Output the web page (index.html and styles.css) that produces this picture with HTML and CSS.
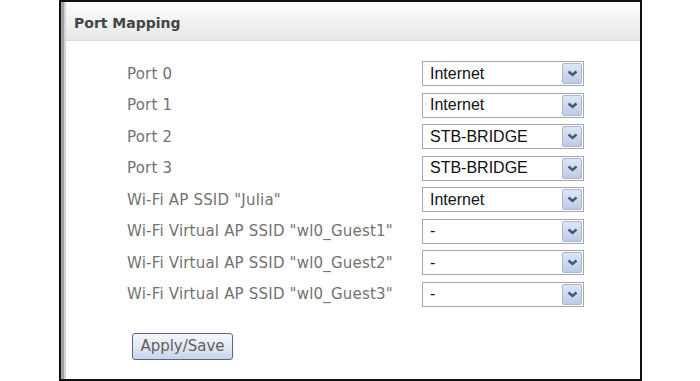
FILE: index.html
```html
<!DOCTYPE html>
<html lang="en">
<head>
    <meta charset="UTF-8">
    <title>Port Mapping</title>
    <link rel="stylesheet" href="styles.css">
</head>
<body>
    <div class="panel">
        <div class="shade">
            <div class="inner">
                <div class="header">Port Mapping</div>
                <div class="form">
                    <div class="label">Port 0</div>
                    <div class="dropdown"><span class="value">Internet</span><span class="arrow"><svg width="11" height="7" viewBox="0 0 11 7"><path d="M1.5 1.5 L5.5 5 L9.5 1.5" fill="none" stroke="#45567a" stroke-width="2.4"/></svg></span></div>

                    <div class="label">Port 1</div>
                    <div class="dropdown"><span class="value">Internet</span><span class="arrow"><svg width="11" height="7" viewBox="0 0 11 7"><path d="M1.5 1.5 L5.5 5 L9.5 1.5" fill="none" stroke="#45567a" stroke-width="2.4"/></svg></span></div>

                    <div class="label">Port 2</div>
                    <div class="dropdown"><span class="value">STB-BRIDGE</span><span class="arrow"><svg width="11" height="7" viewBox="0 0 11 7"><path d="M1.5 1.5 L5.5 5 L9.5 1.5" fill="none" stroke="#45567a" stroke-width="2.4"/></svg></span></div>

                    <div class="label">Port 3</div>
                    <div class="dropdown"><span class="value">STB-BRIDGE</span><span class="arrow"><svg width="11" height="7" viewBox="0 0 11 7"><path d="M1.5 1.5 L5.5 5 L9.5 1.5" fill="none" stroke="#45567a" stroke-width="2.4"/></svg></span></div>

                    <div class="label">Wi-Fi AP SSID "Julia"</div>
                    <div class="dropdown"><span class="value">Internet</span><span class="arrow"><svg width="11" height="7" viewBox="0 0 11 7"><path d="M1.5 1.5 L5.5 5 L9.5 1.5" fill="none" stroke="#45567a" stroke-width="2.4"/></svg></span></div>

                    <div class="label">Wi-Fi Virtual AP SSID "wl0_Guest1"</div>
                    <div class="dropdown"><span class="value">-</span><span class="arrow"><svg width="11" height="7" viewBox="0 0 11 7"><path d="M1.5 1.5 L5.5 5 L9.5 1.5" fill="none" stroke="#45567a" stroke-width="2.4"/></svg></span></div>

                    <div class="label">Wi-Fi Virtual AP SSID "wl0_Guest2"</div>
                    <div class="dropdown"><span class="value">-</span><span class="arrow"><svg width="11" height="7" viewBox="0 0 11 7"><path d="M1.5 1.5 L5.5 5 L9.5 1.5" fill="none" stroke="#45567a" stroke-width="2.4"/></svg></span></div>

                    <div class="label">Wi-Fi Virtual AP SSID "wl0_Guest3"</div>
                    <div class="dropdown"><span class="value">-</span><span class="arrow"><svg width="11" height="7" viewBox="0 0 11 7"><path d="M1.5 1.5 L5.5 5 L9.5 1.5" fill="none" stroke="#45567a" stroke-width="2.4"/></svg></span></div>
                </div>
                <button class="apply-button">Apply/Save</button>
            </div>
        </div>
    </div>
</body>
</html>
```

FILE: styles.css
```css
* {
    box-sizing: border-box;
}

body {
    margin: 0;
    background-color: #fff;
    font-family: "DejaVu Sans", Verdana, sans-serif;
}

.panel {
    margin-left: 59px;
    width: 583px;
    height: 381px;
    border: 2px solid #111;
    overflow: hidden;
}

.shade {
    height: 100%;
    border-left: 3px solid #a2a2a2;
}

.inner {
    height: 100%;
    border-left: 2px solid #d4d4d4;
}

.header {
    height: 39px;
    padding-left: 8px;
    padding-top: 3px;
    display: flex;
    align-items: center;
    background: linear-gradient(#fcfcfc, #e8e8e8);
    border-bottom: 1px solid #d9d9d9;
    font-size: 14px;
    font-weight: bold;
    color: #444;
}

.form {
    display: grid;
    grid-template-columns: 295px 162px;
    grid-auto-rows: 25px;
    row-gap: 6.5px;
    padding-top: 20px;
    padding-left: 61px;
}

.label {
    display: flex;
    align-items: center;
    font-size: 15px;
    letter-spacing: 0.2px;
    color: #727272;
    white-space: nowrap;
}

.dropdown {
    display: flex;
    align-items: center;
    border: 1px solid #a8a8a8;
    background-color: #fff;
    padding: 1px;
}

.value {
    flex: 1;
    padding-left: 6px;
    font-family: "Liberation Sans", Arial, sans-serif;
    font-size: 16px;
    color: #111;
}

.arrow {
    width: 20px;
    height: 21px;
    display: flex;
    align-items: center;
    justify-content: center;
    border: 1px solid #a9b8d2;
    border-radius: 2px;
    background: linear-gradient(#dde6f5, #bccbe6);
}

.apply-button {
    margin-top: 26px;
    margin-left: 66px;
    width: 101px;
    height: 27px;
    padding: 0;
    border: 1px solid #56678a;
    border-radius: 3px;
    background: linear-gradient(#f4f7fc, #dfe6f3 60%, #c6d3ea);
    font-family: "DejaVu Sans", Verdana, sans-serif;
    font-size: 15px;
    color: #606060;
}
```
